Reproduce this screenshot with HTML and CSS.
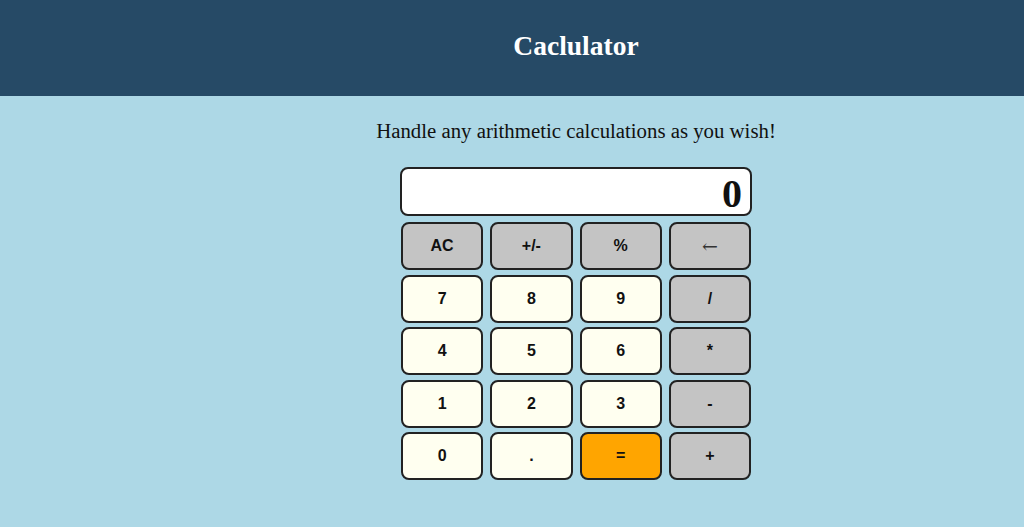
FILE: index.html
```html
<!DOCTYPE html>
<html lang="en">
<head>
  <meta charset="UTF-8" />
  <meta name="viewport" content="width=device-width, initial-scale=1" />
  <title>Caclulator</title>
  <link rel="stylesheet" href="styles.css">
</head>
<body>
  <header class="top">
    <h1>Caclulator</h1>
  </header>
  <main class="content">
    <p class="intro">Handle any arithmetic calculations as you wish!</p>
    <div class="calc">
      <div class="display">0</div>
      <div class="keys">
        <button class="key op">AC</button>
        <button class="key op">+/-</button>
        <button class="key op">%</button>
        <button class="key op arrow">&larr;</button>
        <button class="key">7</button>
        <button class="key">8</button>
        <button class="key">9</button>
        <button class="key op">/</button>
        <button class="key">4</button>
        <button class="key">5</button>
        <button class="key">6</button>
        <button class="key op">*</button>
        <button class="key">1</button>
        <button class="key">2</button>
        <button class="key">3</button>
        <button class="key op">-</button>
        <button class="key">0</button>
        <button class="key">.</button>
        <button class="key equals">=</button>
        <button class="key op">+</button>
      </div>
    </div>
  </main>
</body>
</html>
```

FILE: styles.css
```css
body {
  margin: 0;
  background: #add8e6;
  font-family: "Liberation Serif", "Times New Roman", serif;
  color: #111;
}
.top {
  height: 96px;
  background: #264a66;
  display: flex;
  align-items: center;
  padding-left: 128px;
}
.top h1 {
  flex: 1;
  margin: 0 0 4px;
  text-align: center;
  color: white;
  font-size: 27.5px;
}
.content {
  padding-left: 128px;
  display: flex;
  flex-direction: column;
  align-items: center;
}
.intro {
  font-size: 20.8px;
  margin: 23px 0 24px;
}
.calc {
  width: 352px;
}
.display {
  height: 45px;
  background: white;
  border: 2px solid #222;
  border-radius: 8px;
  text-align: right;
  font-size: 40px;
  font-weight: bold;
  line-height: 49px;
  padding-right: 8px;
  margin-bottom: 6px;
}
.keys {
  display: grid;
  grid-template-columns: repeat(4, 1fr);
  column-gap: 7px;
  row-gap: 4.5px;
  padding: 0 1px;
}
.key {
  height: 48px;
  background: #fffff0;
  border: 2px solid #222;
  border-radius: 8px;
  font-family: "Liberation Sans", Arial, sans-serif;
  font-size: 16px;
  font-weight: bold;
  color: #111;
  padding: 0;
}
.op {
  background: #c4c4c4;
}
.arrow {
  font-family: "DejaVu Serif", "Liberation Serif", serif;
  font-weight: normal;
  font-size: 19px;
  color: #333;
}
.equals {
  background: #ffa500;
}
```
